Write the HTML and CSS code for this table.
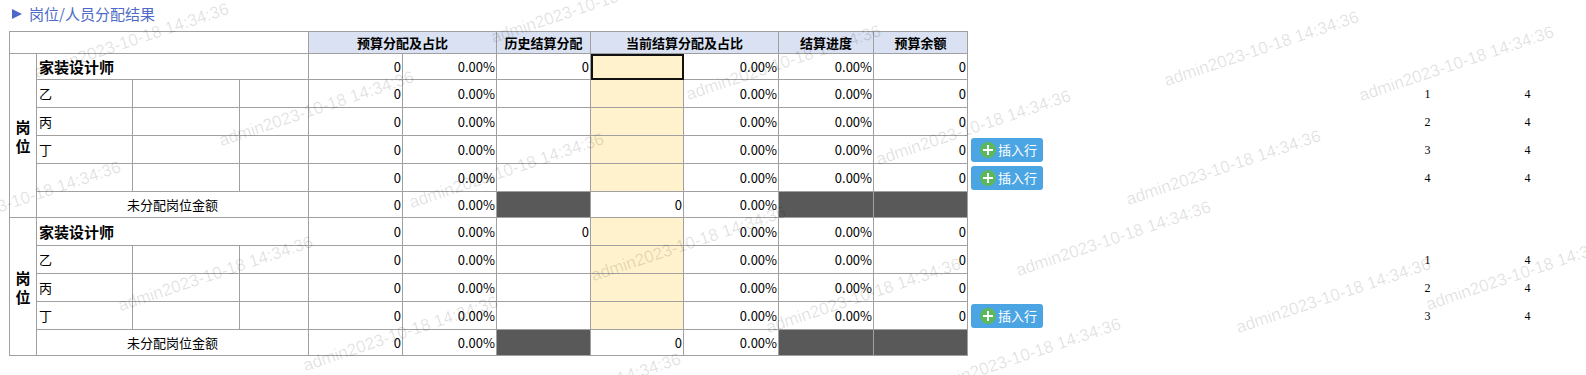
FILE: index.html
```html
<!DOCTYPE html>
<html lang="zh-CN">
<head>
<meta charset="utf-8">
<title>岗位/人员分配结果</title>
<link rel="stylesheet" href="styles.css">
</head>
<body>
<div class="page">
  <div class="title"><span class="tri"></span><span>岗位/人员分配结果</span></div>
  <table class="grid">
    <colgroup>
      <col class="c-lab"><col class="c-n1"><col class="c-n2"><col class="c-n3">
      <col class="c-v"><col class="c-v"><col class="c-v"><col class="c-v2">
      <col class="c-w"><col class="c-w"><col class="c-v">
      <col class="c-btn"><col class="c-num"><col class="c-num">
    </colgroup>
    <tr class="hd">
      <td colspan="4" class="blank"></td>
      <th colspan="2">预算分配及占比</th>
      <th>历史结算分配</th>
      <th colspan="2">当前结算分配及占比</th>
      <th>结算进度</th>
      <th>预算余额</th>
    </tr>
    <!-- group 1 -->
    <tr class="r26">
      <td rowspan="6" class="lab">岗<br>位</td>
      <td colspan="3" class="name">家装设计师</td>
      <td class="n">0</td><td class="n">0.00%</td><td class="n">0</td>
      <td class="yel sel"></td><td class="n">0.00%</td><td class="n">0.00%</td><td class="n">0</td>
    </tr>
    <tr class="r28">
      <td class="t">乙</td><td></td><td></td>
      <td class="n">0</td><td class="n">0.00%</td><td></td>
      <td class="yel"></td><td class="n">0.00%</td><td class="n">0.00%</td><td class="n">0</td>
      <td class="x"></td><td class="x num">1</td><td class="x num">4</td>
    </tr>
    <tr class="r28">
      <td class="t">丙</td><td></td><td></td>
      <td class="n">0</td><td class="n">0.00%</td><td></td>
      <td class="yel"></td><td class="n">0.00%</td><td class="n">0.00%</td><td class="n">0</td>
      <td class="x"></td><td class="x num">2</td><td class="x num">4</td>
    </tr>
    <tr class="r28">
      <td class="t">丁</td><td></td><td></td>
      <td class="n">0</td><td class="n">0.00%</td><td></td>
      <td class="yel"></td><td class="n">0.00%</td><td class="n">0.00%</td><td class="n">0</td>
      <td class="x"><button class="btn" type="button"><span class="plus"></span>插入行</button></td><td class="x num">3</td><td class="x num">4</td>
    </tr>
    <tr class="r28">
      <td class="t"></td><td></td><td></td>
      <td class="n">0</td><td class="n">0.00%</td><td></td>
      <td class="yel"></td><td class="n">0.00%</td><td class="n">0.00%</td><td class="n">0</td>
      <td class="x"><button class="btn" type="button"><span class="plus"></span>插入行</button></td><td class="x num">4</td><td class="x num">4</td>
    </tr>
    <tr class="r26">
      <td colspan="3" class="un">未分配岗位金额</td>
      <td class="n">0</td><td class="n">0.00%</td><td class="dark"></td>
      <td class="n">0</td><td class="n">0.00%</td><td class="dark"></td><td class="dark"></td>
    </tr>
    <!-- group 2 -->
    <tr class="r28">
      <td rowspan="5" class="lab">岗<br>位</td>
      <td colspan="3" class="name">家装设计师</td>
      <td class="n">0</td><td class="n">0.00%</td><td class="n">0</td>
      <td class="yel"></td><td class="n">0.00%</td><td class="n">0.00%</td><td class="n">0</td>
    </tr>
    <tr class="r28">
      <td class="t">乙</td><td></td><td></td>
      <td class="n">0</td><td class="n">0.00%</td><td></td>
      <td class="yel"></td><td class="n">0.00%</td><td class="n">0.00%</td><td class="n">0</td>
      <td class="x"></td><td class="x num">1</td><td class="x num">4</td>
    </tr>
    <tr class="r28">
      <td class="t">丙</td><td></td><td></td>
      <td class="n">0</td><td class="n">0.00%</td><td></td>
      <td class="yel"></td><td class="n">0.00%</td><td class="n">0.00%</td><td class="n">0</td>
      <td class="x"></td><td class="x num">2</td><td class="x num">4</td>
    </tr>
    <tr class="r28">
      <td class="t">丁</td><td></td><td></td>
      <td class="n">0</td><td class="n">0.00%</td><td></td>
      <td class="yel"></td><td class="n">0.00%</td><td class="n">0.00%</td><td class="n">0</td>
      <td class="x"><button class="btn" type="button"><span class="plus"></span>插入行</button></td><td class="x num">3</td><td class="x num">4</td>
    </tr>
    <tr class="r26">
      <td colspan="3" class="un">未分配岗位金额</td>
      <td class="n">0</td><td class="n">0.00%</td><td class="dark"></td>
      <td class="n">0</td><td class="n">0.00%</td><td class="dark"></td><td class="dark"></td>
    </tr>
  </table>
</div>
<div class="wm" aria-hidden="true">
  <span style="--x:38px;--y:80px">admin2023-10-18 14:34:36</span>
  <span style="--x:495px;--y:45px">admin2023-10-18 14:34:36</span>
  <span style="--x:690px;--y:102px">admin2023-10-18 14:34:36</span>
  <span style="--x:1168px;--y:88px">admin2023-10-18 14:34:36</span>
  <span style="--x:1363px;--y:103px">admin2023-10-18 14:34:36</span>
  <span style="--x:223px;--y:148px">admin2023-10-18 14:34:36</span>
  <span style="--x:880px;--y:167px">admin2023-10-18 14:34:36</span>
  <span style="--x:1130px;--y:207px">admin2023-10-18 14:34:36</span>
  <span style="--x:-70px;--y:238px">admin2023-10-18 14:34:36</span>
  <span style="--x:413px;--y:210px">admin2023-10-18 14:34:36</span>
  <span style="--x:595px;--y:283px">admin2023-10-18 14:34:36</span>
  <span style="--x:1020px;--y:278px">admin2023-10-18 14:34:36</span>
  <span style="--x:122px;--y:313px">admin2023-10-18 14:34:36</span>
  <span style="--x:307px;--y:373px">admin2023-10-18 14:34:36</span>
  <span style="--x:770px;--y:335px">admin2023-10-18 14:34:36</span>
  <span style="--x:1240px;--y:335px">admin2023-10-18 14:34:36</span>
  <span style="--x:1430px;--y:312px">admin2023-10-18 14:34:36</span>
  <span style="--x:930px;--y:395px">admin2023-10-18 14:34:36</span>
  <span style="--x:490px;--y:430px">admin2023-10-18 14:34:36</span>
</div>
</body>
</html>
```
FILE: styles.css
```css
html, body {
  margin: 0;
  padding: 0;
  background: #fff;
}
body {
  position: relative;
  width: 1586px;
  height: 375px;
  overflow: hidden;
  font-family: "Noto Sans CJK SC", "Noto Sans", sans-serif;
  font-size: 13px;
  color: #000;
}
.page {
  padding-left: 9px;
}
.title {
  height: 31px;
  display: flex;
  align-items: center;
  padding-left: 3px;
  padding-bottom: 4px;
  box-sizing: border-box;
  font-size: 15px;
  color: #4d6bc6;
}
.tri {
  display: inline-block;
  width: 0;
  height: 0;
  border-left: 10px solid #4d6bc6;
  border-top: 5px solid transparent;
  border-bottom: 5px solid transparent;
  margin-right: 7px;
}
.grid {
  border-collapse: collapse;
  table-layout: fixed;
  width: 1568px;
}
.c-lab { width: 27px; }
.c-n1 { width: 96px; }
.c-n2 { width: 107px; }
.c-n3 { width: 69px; }
.c-v { width: 94px; }
.c-v2 { width: 93px; }
.c-w { width: 95px; }
.c-btn { width: 410px; }
.c-num { width: 100px; }

.grid td, .grid th {
  border: 1px solid #a0a0a0;
  padding: 0 2px;
  overflow: hidden;
  white-space: nowrap;
  line-height: 16px;
}
.hd { height: 22px; }
.r26 { height: 26px; }
.r28 { height: 28px; }
.grid th {
  background: #d9e1f2;
  font-weight: bold;
  font-size: 13px;
  text-align: center;
}
.grid td.blank {
  background: #fff;
}
.grid td.lab {
  text-align: center;
  font-weight: bold;
  font-size: 15px;
  line-height: 19px;
  padding: 0;
}
.grid td.name {
  font-weight: bold;
  font-size: 15px;
}
.grid td.n {
  text-align: right;
  padding-right: 1px;
}
.grid td.un {
  text-align: center;
}
.grid td.yel {
  background: #fff2cc;
}
.grid td.sel {
  outline: 2px solid #111;
  outline-offset: -2px;
}
.grid td.dark {
  background: #595959;
}
.grid td.x {
  border: none;
  padding: 0;
}
.grid td.num {
  text-align: center;
  font-family: "Liberation Serif", serif;
  font-size: 12px;
}
.btn {
  display: flex;
  align-items: center;
  height: 24px;
  width: 72px;
  margin-left: 3px;
  padding: 0 0 0 9px;
  border: none;
  border-radius: 3px;
  background: #4ba5e3;
  color: #fff;
  font-family: "Noto Sans CJK SC", sans-serif;
  font-size: 13px;
  box-sizing: border-box;
}
.plus {
  position: relative;
  width: 16px;
  height: 16px;
  border-radius: 50%;
  background: #5cb85c;
  margin-right: 2px;
  flex: none;
}
.plus::before, .plus::after {
  content: "";
  position: absolute;
  background: #fff;
  left: 50%;
  top: 50%;
  transform: translate(-50%, -50%);
}
.plus::before { width: 10px; height: 2px; }
.plus::after { width: 2px; height: 10px; }

.wm {
  position: absolute;
  left: 0;
  top: 0;
  width: 1586px;
  height: 375px;
  overflow: hidden;
  pointer-events: none;
}
.wm span {
  position: absolute;
  left: var(--x);
  top: calc(var(--y) - 17px);
  transform-origin: 0 100%;
  transform: rotate(-18.5deg);
  font-family: "Liberation Sans", sans-serif;
  font-size: 17px;
  line-height: 20px;
  white-space: nowrap;
  color: rgba(0, 0, 0, 0.12);
}
```
